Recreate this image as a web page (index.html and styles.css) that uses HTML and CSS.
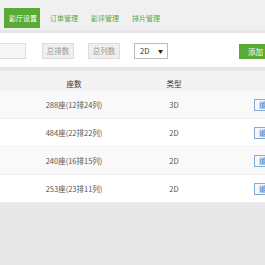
FILE: index.html
```html
<!DOCTYPE html>
<html lang="zh-CN">
<head>
    <meta charset="UTF-8">
    <meta name="viewport" content="width=device-width, initial-scale=1.0">
    <title>影厅设置</title>
    <link rel="stylesheet" href="styles.css">
</head>
<body>

    <div class="tabs">
        <div class="tab active">影厅设置</div>
        <div class="tab">订单管理</div>
        <div class="tab">影评管理</div>
        <div class="tab">排片管理</div>
    </div>

    <div class="panel">
        <div class="toolbar">
            <input class="name-input" type="text">
            <div class="btn-gray">总排数</div>
            <div class="btn-gray">总列数</div>
            <div class="fake-select">2D <span class="arrow">▼</span></div>
            <div class="btn-add">添加</div>
        </div>

        <table class="hall-table">
            <thead>
                <tr><th class="col-seat">座数</th><th class="col-type">类型</th><th class="col-op"></th></tr>
            </thead>
            <tbody>
                <tr><td>288座(12排24列)</td><td>3D</td><td class="col-op"><span class="btn-edit">编辑</span></td></tr>
                <tr><td>484座(22排22列)</td><td>2D</td><td class="col-op"><span class="btn-edit">编辑</span></td></tr>
                <tr><td>240座(16排15列)</td><td>2D</td><td class="col-op"><span class="btn-edit">编辑</span></td></tr>
                <tr><td>253座(23排11列)</td><td>2D</td><td class="col-op"><span class="btn-edit">编辑</span></td></tr>
            </tbody>
        </table>
    </div>

</body>
</html>
```

FILE: styles.css
```css
/* page */
body {
    margin: 0;
    background: #e8e8e8;
    font-family: "Noto Sans CJK SC", "Noto Sans", sans-serif;
    font-size: 7.5px;
    color: #555;
    overflow: hidden;
}

/* tab bar */
.tabs {
    display: flex;
    gap: 3px;
    height: 22px;
    padding: 8px 0 0 4px;
    background: #f0f0f0;
    border-bottom: 3px solid #e6e6e6;
    font-size: 7px;
}

.tab {
    flex-shrink: 0;
    height: 20px;
    line-height: 20px;
    padding: 0 5px;
    color: #5aa83a;
}

.tab.active {
    background: #5aab35;
    color: #fff;
    padding: 0 3px 0 5px;
    margin-right: 2px;
}

/* white panel */
.panel {
    background: #fff;
}

.toolbar {
    display: flex;
    align-items: center;
    height: 16px;
    padding: 10px 0 8px 0;
    border-bottom: 4px solid #e6e6e6;
}

.toolbar > * {
    flex-shrink: 0;
}

.name-input {
    box-sizing: border-box;
    width: 28px;
    height: 16px;
    margin: 0 16px 0 -2px;
    border: 1px solid #ddd;
    background: #f6f6f6;
}

.btn-gray {
    box-sizing: border-box;
    width: 32px;
    height: 16px;
    line-height: 14px;
    margin-right: 14px;
    text-align: center;
    border: 1px solid #ddd;
    background: #efefef;
    color: #999;
}

.fake-select {
    box-sizing: border-box;
    position: relative;
    width: 34px;
    height: 16px;
    line-height: 14px;
    padding-left: 5px;
    border: 1px solid #bbb;
    background: #fff;
    color: #333;
}

.fake-select .arrow {
    position: absolute;
    right: 4px;
    top: 0;
    font-size: 5px;
    color: #222;
}

.btn-add {
    box-sizing: border-box;
    height: 15px;
    line-height: 15px;
    margin-left: 71px;
    padding: 0 9px;
    background: #5aab35;
    color: #fff;
    white-space: nowrap;
}

/* table */
.hall-table {
    width: 300px;
    border-collapse: collapse;
    table-layout: fixed;
}

.hall-table th {
    height: 16px;
    padding: 4px 0 0 0;
    background: #f3f3f3;
    font-weight: normal;
    color: #333;
}

.hall-table td {
    height: 27px;
    padding: 0;
    text-align: center;
    border-bottom: 1px solid #f0f0f0;
}

.hall-table tbody tr:nth-child(odd) td {
    background: #f9f9f9;
}

.col-seat {
    width: 148px;
}

.col-type {
    width: 52px;
}

.hall-table .col-op {
    text-align: left;
    padding-left: 54px;
}

.btn-edit {
    display: inline-block;
    box-sizing: border-box;
    height: 12px;
    line-height: 10px;
    padding: 0 4px;
    border: 1px solid #86a9cf;
    background: #f4f8fc;
    color: #3a7bd5;
    vertical-align: middle;
}
```
